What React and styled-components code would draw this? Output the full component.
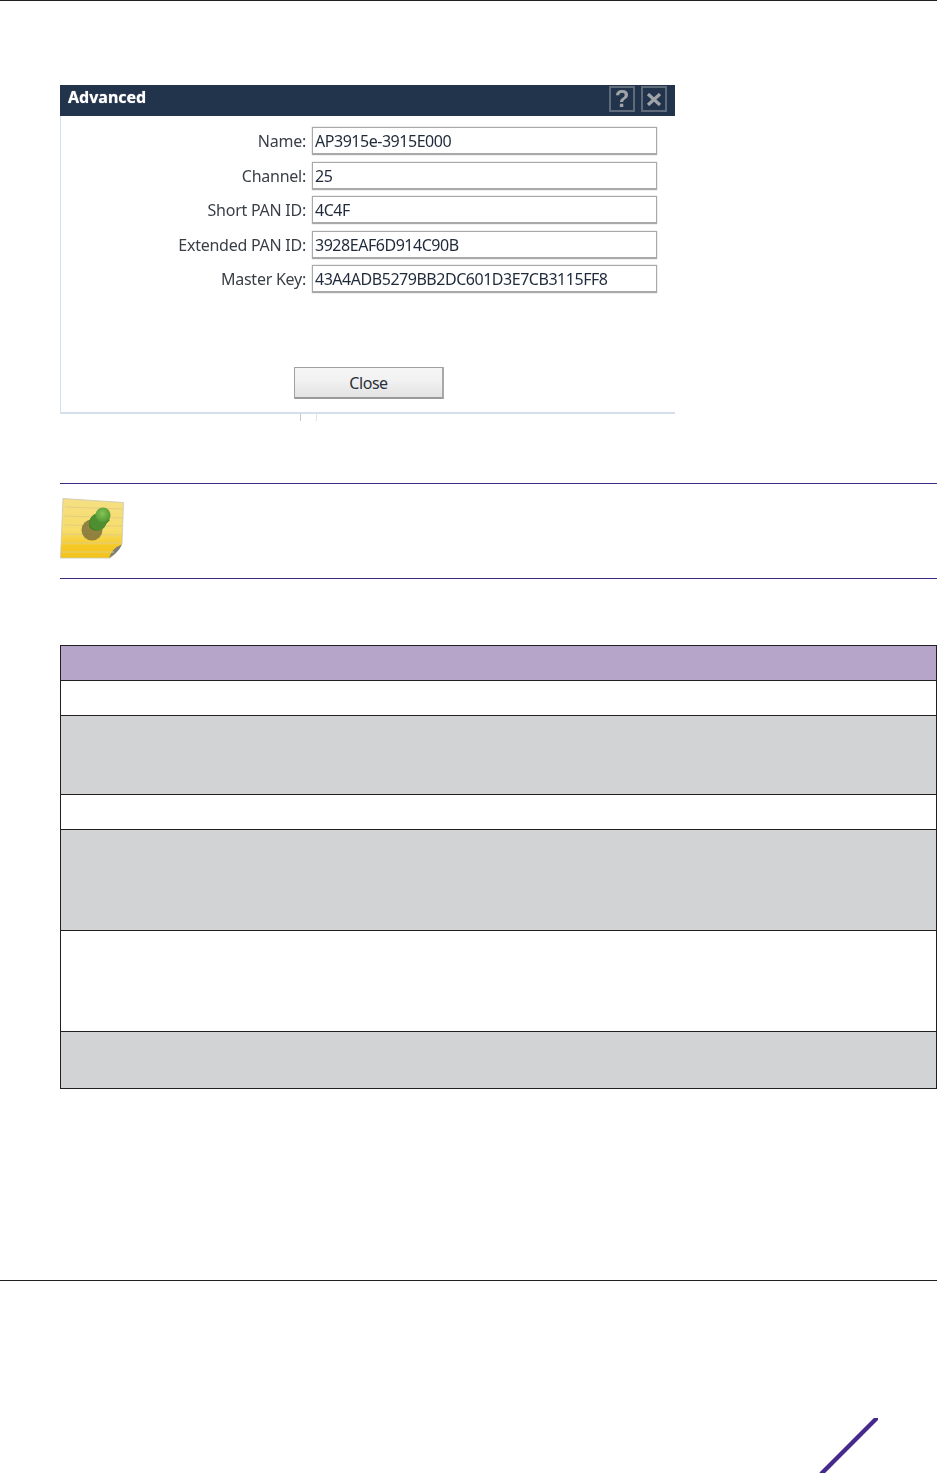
import React from 'react';
import styled, { createGlobalStyle } from 'styled-components';

const Global = createGlobalStyle`
  html, body { margin: 0; padding: 0; background: #fff; }
  body { font-family: "Noto Sans", "Open Sans", sans-serif; }
`;

const Page = styled.div`
  width: 937px;
  height: 1473px;
  overflow: hidden;
  display: flex;
  flex-direction: column;
  box-sizing: border-box;
  border-top: 1px solid #231f20;
  background: #fff;
`;

const Content = styled.main`
  display: flex;
  flex-direction: column;
  padding: 84px 0 0 60px;
`;

const Dialog = styled.section`
  width: 615px;
  box-sizing: border-box;
  display: flex;
  flex-direction: column;
  background: #fff;
`;

const TitleBar = styled.header`
  height: 31px;
  background: #22344c;
  display: flex;
  align-items: flex-start;
  justify-content: space-between;
  box-sizing: border-box;
  padding: 1px 8px 0 8px;
`;

const Title = styled.h2`
  margin: 0;
  font-family: "Noto Sans", sans-serif;
  font-size: 16px;
  line-height: 22px;
  font-weight: 700;
  letter-spacing: 0;
  color: #fff;
  text-shadow: 0 0 1px rgba(255, 255, 255, 0.7);
  filter: blur(0.3px);
`;

const TitleButtons = styled.div`
  display: flex;
  gap: 6px;
`;

const TitleButton = styled.div`
  width: 26px;
  height: 26px;
  box-sizing: border-box;
  border: 2px solid #5f6b7a;
  color: #a0a4a9;
  display: flex;
  align-items: center;
  justify-content: center;
  font-family: "Liberation Sans", sans-serif;
  font-size: 24px;
  font-weight: 700;
  line-height: 1;
  filter: blur(0.3px);
`;

const DialogBody = styled.div`
  height: 298px;
  box-sizing: border-box;
  border-left: 1px solid #d3e1ee;
  border-bottom: 2px solid #d3e0ec;
  padding-top: 11px;
  display: flex;
  flex-direction: column;
`;

const Fields = styled.div`
  display: grid;
  grid-template-columns: 245px 345px;
  column-gap: 6px;
  row-gap: 6.5px;
  align-items: center;
`;

const Label = styled.div`
  text-align: right;
  font-size: 16px;
  line-height: 28px;
  letter-spacing: -0.25px;
  color: #3a3f46;
  filter: blur(0.3px);
`;

const Field = styled.div`
  height: 28px;
  box-sizing: border-box;
  border: 1px solid #a9a9a9;
  border-bottom-width: 2px;
  box-shadow: 0 0 1px #a0a0a0;
  padding: 0 2px;
  font-size: 16px;
  line-height: 26px;
  letter-spacing: -0.47px;
  color: #1e2a3a;
  white-space: nowrap;
  filter: blur(0.3px);
`;

const ButtonRow = styled.div`
  margin-top: 74px;
  padding-left: 233px;
`;

const CloseButton = styled.div`
  width: 150px;
  height: 32px;
  box-sizing: border-box;
  border: 1px solid #a0a0a0;
  border-bottom: 2px solid #9a9a9a;
  border-right: 2px solid #a8a8a8;
  border-radius: 1px;
  background: linear-gradient(#f6f6f6, #f1f1f1 45%, #e2e2e2);
  text-align: center;
  font-size: 16px;
  line-height: 31px;
  letter-spacing: -0.45px;
  color: #2a3038;
`;

const Ticks = styled.div`
  width: 17px;
  height: 7px;
  margin-left: 240px;
  box-sizing: border-box;
  border-left: 1px solid #c2c8ce;
  border-right: 1px solid #e0e4e8;
`;

const Note = styled.aside`
  margin-top: 62px;
  height: 96px;
  box-sizing: border-box;
  border-top: 1px solid #3f2a86;
  border-bottom: 1px solid #3f2a86;
  padding-top: 14px;
  display: flex;
  align-items: flex-start;
`;

const Table = styled.div`
  margin-top: 66px;
  width: 877px;
  box-sizing: border-box;
  border-left: 1px solid #231f20;
  border-right: 1px solid #231f20;
  border-top: 1px solid #231f20;
  display: flex;
  flex-direction: column;
`;

const tones = { head: '#b7a5c9', plain: '#ffffff', shade: '#d2d3d5' };

const Row = styled.div`
  height: ${p => p.$h}px;
  box-sizing: border-box;
  border-bottom: 1px solid #231f20;
  background: ${p => tones[p.$tone]};
`;

const Footer = styled.footer`
  margin-top: 191px;
  height: 194px;
  box-sizing: border-box;
  border-top: 1px solid #231f20;
  display: flex;
  justify-content: flex-end;
  align-items: flex-end;
  padding-right: 59px;
`;

const NoteIcon = () => (
  <svg width="66" height="63" viewBox="0 0 66 63" style={{ display: 'block' }}>
    <defs>
      <linearGradient id="paper" x1="0" y1="0" x2="0" y2="1">
        <stop offset="0" stopColor="#f5df84" />
        <stop offset="0.55" stopColor="#f7dd68" />
        <stop offset="0.8" stopColor="#f5c926" />
        <stop offset="1" stopColor="#f2c21a" />
      </linearGradient>
      <radialGradient id="pinhead" cx="0.45" cy="0.4" r="0.6">
        <stop offset="0" stopColor="#86c455" />
        <stop offset="1" stopColor="#4f9632" />
      </radialGradient>
    </defs>
    <path d="M3 0.5 L63.5 4.5 L62 46 Q56 56 50 60 L0.5 60 Z" fill="url(#paper)" stroke="#c9c6b4" strokeWidth="0.8" />
    <path d="M49 60 Q52 50 62 46.5 Q58 55 49 60 Z" fill="#7d7d75" />
    <g stroke="#e3cd82" strokeWidth="1">
      <path d="M5 9 L63 11" />
      <path d="M4 18 L63 20" />
      <path d="M4 27 L62 28" />
      <path d="M3 36 L62 37" />
      <path d="M2 45 L62 45" />
      <path d="M2 54 L54 54" />
    </g>
    <circle cx="32" cy="32" r="10.5" fill="#7f7238" opacity="0.85" />
    <path d="M30 21 L40 12 L50 22 L40 32 Q33 34 30 30 Q28 25 30 21 Z" fill="#3f7f2a" />
    <circle cx="38" cy="24" r="8.5" fill="#4d8f30" />
    <circle cx="43" cy="17" r="7.5" fill="url(#pinhead)" />
  </svg>
);

const Slash = () => (
  <svg width="60" height="55" viewBox="0 0 60 55" style={{ display: 'block' }}>
    <path d="M60 -1 L3 56" stroke="#46298c" strokeWidth="4.4" fill="none" />
  </svg>
);

const fields = [
  ['Name:', 'AP3915e-3915E000'],
  ['Channel:', '25'],
  ['Short PAN ID:', '4C4F'],
  ['Extended PAN ID:', '3928EAF6D914C90B'],
  ['Master Key:', '43A4ADB5279BB2DC601D3E7CB3115FF8'],
];

const rows = [
  ['head', 35], ['plain', 35], ['shade', 79], ['plain', 35],
  ['shade', 101], ['plain', 101], ['shade', 57],
];

export default function App() {
  return (
    <Page>
      <Global />
      <Content>
        <Dialog>
          <TitleBar>
            <Title>Advanced</Title>
            <TitleButtons>
              <TitleButton>?</TitleButton>
              <TitleButton>
                <svg width="16" height="13" viewBox="0 0 16 13">
                  <path d="M2 1 L14 12 M14 1 L2 12" stroke="#a0a4a9" strokeWidth="3.2" />
                </svg>
              </TitleButton>
            </TitleButtons>
          </TitleBar>
          <DialogBody>
            <Fields>
              {fields.map(([label, value]) => (
                <React.Fragment key={label}>
                  <Label>{label}</Label>
                  <Field>{value}</Field>
                </React.Fragment>
              ))}
            </Fields>
            <ButtonRow>
              <CloseButton>Close</CloseButton>
            </ButtonRow>
          </DialogBody>
          <Ticks />
        </Dialog>
        <Note>
          <NoteIcon />
        </Note>
        <Table>
          {rows.map(([tone, h], i) => (
            <Row key={i} $tone={tone} $h={h} />
          ))}
        </Table>
      </Content>
      <Footer>
        <Slash />
      </Footer>
    </Page>
  );
}
